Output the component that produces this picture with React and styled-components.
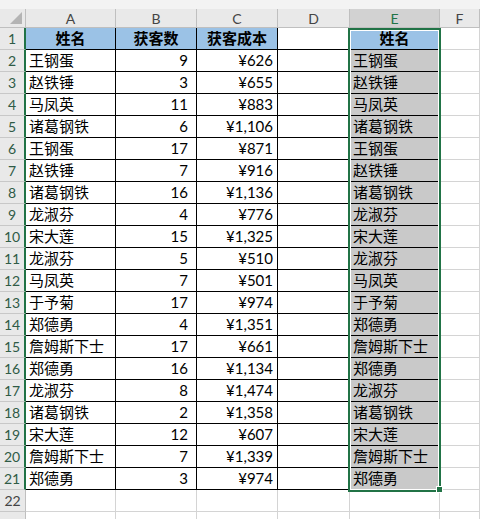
import React from "react";
import styled, { createGlobalStyle, css } from "styled-components";

const Global = createGlobalStyle`
  html, body { margin: 0; padding: 0; background: #fff; }
  body { font-family: "Lato", "Noto Sans CJK SC", sans-serif; }
`;

const GREEN = "#217346";
const GRID = "#d4d4d4";

const Page = styled.div`
  position: relative;
  width: 480px;
  height: 519px;
  overflow: hidden;
  background: #fff;
`;

const TopStrip = styled.div`
  height: 9px;
  background: #f3f3f3;
`;

const Sheet = styled.div`
  display: grid;
  grid-template-columns: 26px 90px 81px 81px 72px 90px 1fr;
  grid-template-rows: 19px;
  grid-auto-rows: 22px;
`;

const Corner = styled.div`
  position: relative;
  background: #e9e9e9;
  border-right: 1px solid #bfbfbf;
  border-bottom: 1px solid #bfbfbf;
  box-sizing: border-box;
  svg { position: absolute; right: 3px; bottom: 3px; }
`;

const ColHeader = styled.div`
  box-sizing: border-box;
  background: ${(p) => (p.$selected ? "#d2d2d2" : "#e9e9e9")};
  color: ${(p) => (p.$selected ? GREEN : "#444")};
  border-right: 1px solid #bfbfbf;
  border-bottom: 1px solid #bfbfbf;
  font-family: "Lato", "Liberation Sans", sans-serif;
  font-size: 14px;
  display: flex;
  align-items: center;
  justify-content: center;
  padding-top: 1px;
`;

const RowHeader = styled.div`
  box-sizing: border-box;
  background: #e9e9e9;
  color: ${(p) => (p.$selected ? "#2f5b46" : "#444")};
  border-bottom: 1px solid #c8c8c8;
  border-right: ${(p) => (p.$selected ? `2px solid ${GREEN}` : "1px solid #bfbfbf")};
  font-family: "Lato", "Liberation Sans", sans-serif;
  font-size: 14px;
  display: flex;
  align-items: flex-end;
  justify-content: center;
  padding-bottom: 2px;
`;

const kinds = {
  head: css`
    background: #9bc2e6;
    font-weight: bold;
    justify-content: center;
  `,
  gray: css`
    background: #c9c9c9;
  `,
  plain: css``,
};

const Cell = styled.div`
  box-sizing: border-box;
  display: flex;
  align-items: flex-end;
  justify-content: ${(p) => (p.$right ? "flex-end" : "flex-start")};
  padding: 0 ${(p) => p.$pr ?? 3}px 2px 3px;
  font-size: 15px;
  line-height: 18px;
  color: #000;
  white-space: nowrap;
  overflow: visible;
  border-right: 1px solid ${(p) => (p.$border ? "#000" : GRID)};
  border-bottom: 1px solid ${(p) => (p.$border ? "#000" : GRID)};
  ${(p) => kinds[p.$kind || "plain"]}
`;

const Selection = styled.div`
  position: absolute;
  left: 348px;
  top: 28px;
  width: 93px;
  height: 464px;
  box-sizing: border-box;
  border: 2px solid ${GREEN};
  box-shadow: inset 0 0 0 1px #fff;
  pointer-events: none;
`;

const FillHandle = styled.div`
  position: absolute;
  left: 436px;
  top: 486px;
  width: 7px;
  height: 7px;
  box-sizing: border-box;
  background: ${GREEN};
  border: 1px solid #fff;
`;

const data = [
  ["王钢蛋", 9, "¥626"],
  ["赵铁锤", 3, "¥655"],
  ["马凤英", 11, "¥883"],
  ["诸葛钢铁", 6, "¥1,106"],
  ["王钢蛋", 17, "¥871"],
  ["赵铁锤", 7, "¥916"],
  ["诸葛钢铁", 16, "¥1,136"],
  ["龙淑芬", 4, "¥776"],
  ["宋大莲", 15, "¥1,325"],
  ["龙淑芬", 5, "¥510"],
  ["马凤英", 7, "¥501"],
  ["于予菊", 17, "¥974"],
  ["郑德勇", 4, "¥1,351"],
  ["詹姆斯下士", 17, "¥661"],
  ["郑德勇", 16, "¥1,134"],
  ["龙淑芬", 8, "¥1,474"],
  ["诸葛钢铁", 2, "¥1,358"],
  ["宋大莲", 12, "¥607"],
  ["詹姆斯下士", 7, "¥1,339"],
  ["郑德勇", 3, "¥974"],
];

const cols = ["A", "B", "C", "D", "E", "F"];

export default function App() {
  const rows = [];
  rows.push(
    <React.Fragment key="r1">
      <RowHeader $selected>1</RowHeader>
      <Cell $kind="head" $border>姓名</Cell>
      <Cell $kind="head" $border>获客数</Cell>
      <Cell $kind="head" $border>获客成本</Cell>
      <Cell $border />
      <Cell $kind="head" $border>姓名</Cell>
      <Cell />
    </React.Fragment>
  );
  data.forEach(([name, n, cost], i) => {
    rows.push(
      <React.Fragment key={"r" + (i + 2)}>
        <RowHeader $selected>{i + 2}</RowHeader>
        <Cell $border>{name}</Cell>
        <Cell $border $right $pr={8}>{n}</Cell>
        <Cell $border $right $pr={4}>{cost}</Cell>
        <Cell $border />
        <Cell $kind="gray" $border>{name}</Cell>
        <Cell />
      </React.Fragment>
    );
  });
  [22, 23].forEach((r) => {
    rows.push(
      <React.Fragment key={"r" + r}>
        <RowHeader>{r === 22 ? r : null}</RowHeader>
        {cols.map((c) => (
          <Cell key={c} />
        ))}
      </React.Fragment>
    );
  });

  return (
    <Page>
      <Global />
      <TopStrip />
      <Sheet>
        <Corner>
          <svg width="12" height="12" viewBox="0 0 12 12">
            <polygon points="12,0 12,12 0,12" fill="#b4b4b4" />
          </svg>
        </Corner>
        {cols.map((c) => (
          <ColHeader key={c} $selected={c === "E"}>
            {c}
          </ColHeader>
        ))}
        {rows}
      </Sheet>
      <Selection />
      <FillHandle />
    </Page>
  );
}
